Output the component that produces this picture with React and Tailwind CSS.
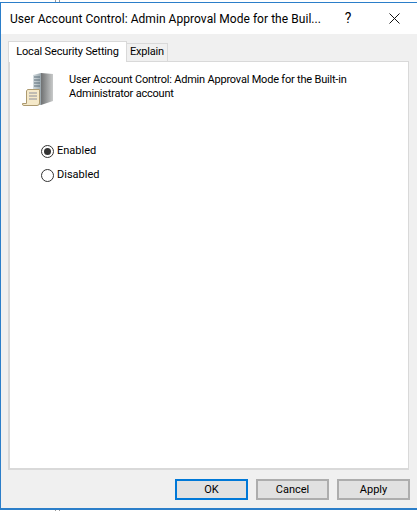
const ServerIcon = () => (
  <svg width="32" height="36" viewBox="0 0 32 36" className="shrink-0">
    <defs>
      <linearGradient id="front" x1="0" y1="0" x2="1" y2="0">
        <stop offset="0" stopColor="#d5dde0" />
        <stop offset="1" stopColor="#9aa7ae" />
      </linearGradient>
      <linearGradient id="side" x1="0" y1="0" x2="1" y2="0">
        <stop offset="0" stopColor="#6f7172" />
        <stop offset="1" stopColor="#c8caca" />
      </linearGradient>
    </defs>
    <path d="M11 3 L19 1 L19 33 L11 33 Z" fill="url(#front)" />
    <path d="M19 1 L31 2 L31 29 L19 33 Z" fill="url(#side)" />
    <path d="M12 5h6M12 8h6M12 11h6M12 14h6" stroke="#5d6f7a" strokeWidth="1" />
    <rect x="16" y="30" width="2" height="2" fill="#4fc04a" />
    <path d="M5.5 17.5 H17.5 V31 Q17.5 33.5 15 33.5 H2 Q0 33.5 0.5 31.5 H4.5 V19 Z" fill="#f5e9c9" stroke="#ad9a70" strokeWidth="1" />
    <path d="M7 21h8M7 24h8M7 27h8" stroke="#8c8f9c" strokeWidth="1" />
  </svg>
);

const Radio = ({ label, checked }) => (
  <label className="flex items-center h-[14px]">
    <span className="w-[13px] h-[13px] rounded-full border border-[#333333] bg-white shrink-0 flex items-center justify-center">
      {checked && <span className="w-[7px] h-[7px] rounded-full bg-[#333333]" />}
    </span>
    <span className="ml-[3px] text-[11px] text-black leading-[14px]">{label}</span>
  </label>
);

const Button = ({ children, primary }) => (
  <button
    className={`w-[73px] h-[21px] bg-[#e1e1e1] text-[11px] text-black leading-none border-2 ${primary ? 'border-[#0078d7]' : 'border-[#adadad]'}`}
  >
    {children}
  </button>
);

const App = () => {
  return (
    <div className="w-[417px] h-[511px] overflow-hidden bg-white flex flex-col font-['Roboto','Liberation_Sans',sans-serif]">
      <div className="h-[2px] overflow-hidden flex pl-[55px] text-[12px] leading-[14px] text-black">
        <span className="w-[5px] h-[2px] border-x border-[#999999]" />
        <div className="ml-[8px] -mt-[12px]">Edit...</div>
      </div>

      <div className="flex-1 flex flex-col border-l-[1.5px] border-t-[1.5px] border-b-[2px] border-[#2b7ec9] bg-[#f0f0f0] min-h-0">
        <div className="h-[31px] bg-white flex items-center shrink-0 pl-[9px]">
          <span className="text-[12px] tracking-[0.05px] text-black w-[311px] whitespace-nowrap">User Account Control: Admin Approval Mode for the Buil...</span>
          <span className="w-[18px] text-center text-[14px] text-black ml-[18px]">?</span>
          <svg width="11" height="11" viewBox="0 0 11 11" className="ml-[32px]">
            <path d="M0.5 0.5 L10.5 10.5 M10.5 0.5 L0.5 10.5" stroke="#111111" strokeWidth="1" />
          </svg>
        </div>

        <div className="flex-1 flex flex-col pl-[7px] pr-[7px] pt-[7px] min-h-0">
          <div className="flex items-end h-[20px] shrink-0">
            <div className="h-[21px] w-[119px] bg-white border border-b-0 border-[#d9d9d9] text-[11px] tracking-[-0.15px] text-black flex items-center justify-center relative z-10 -mb-px">
              Local Security Setting
            </div>
            <div className="h-[18px] w-[41px] bg-[#f0f0f0] border border-l-0 border-b-0 border-[#d9d9d9] text-[11px] tracking-[-0.2px] text-black flex items-center justify-center">
              Explain
            </div>
          </div>

          <div className="h-[409px] w-[401px] bg-white border-2 border-[#d9d9d9] border-t border-r pl-[12px] pt-[10px] shrink-0">
            <div className="flex">
              <ServerIcon />
              <div className="ml-[15px] mt-[1px] text-[11px] tracking-[-0.2px] leading-[14px] text-black">
                <p>User Account Control: Admin Approval Mode for the Built-in</p>
                <p>Administrator account</p>
              </div>
            </div>
            <div className="mt-[36px] ml-[19px] flex flex-col gap-[10px]">
              <Radio label="Enabled" checked />
              <Radio label="Disabled" />
            </div>
          </div>

          <div className="flex justify-end gap-[8px] mt-[9px] mr-0">
            <Button primary>OK</Button>
            <Button>Cancel</Button>
            <Button>Apply</Button>
          </div>
        </div>
      </div>

      <div className="h-[1px] overflow-hidden flex pl-[55px] text-[12px] leading-[14px] text-[#888888]">
        <span className="w-[5px] h-[2px] border-x border-[#999999]" />
        <div className="ml-[7px]">Edit</div>
      </div>
    </div>
  );
};

export default App;
